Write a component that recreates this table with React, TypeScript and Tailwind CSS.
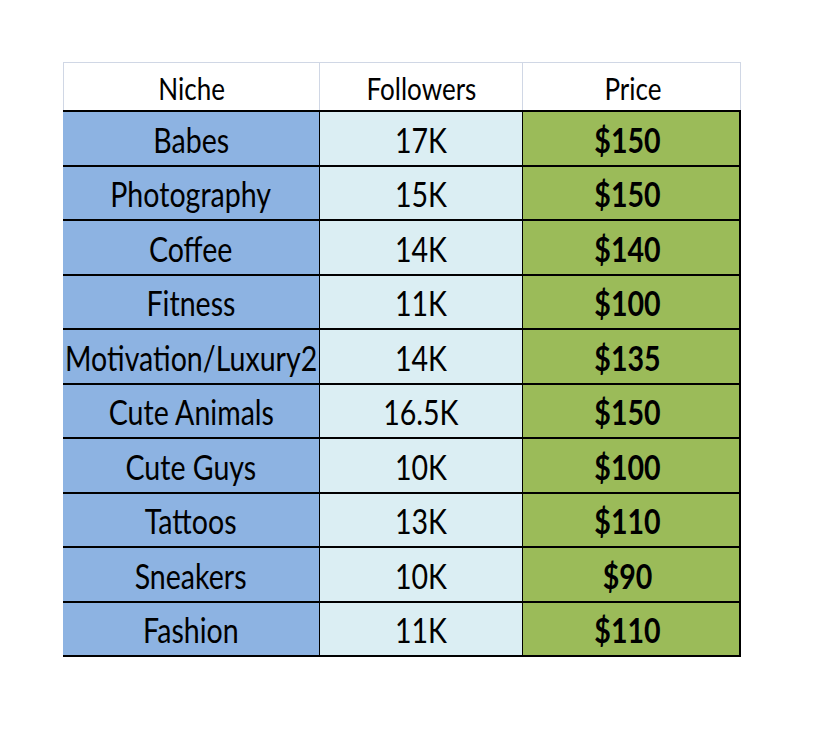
const ROWS = [
  { niche: "Babes", followers: "17K", price: "$150" },
  { niche: "Photography", followers: "15K", price: "$150" },
  { niche: "Coffee", followers: "14K", price: "$140" },
  { niche: "Fitness", followers: "11K", price: "$100" },
  { niche: "Motivation/Luxury2", followers: "14K", price: "$135" },
  { niche: "Cute Animals", followers: "16.5K", price: "$150" },
  { niche: "Cute Guys", followers: "10K", price: "$100" },
  { niche: "Tattoos", followers: "13K", price: "$110" },
  { niche: "Sneakers", followers: "10K", price: "$90" },
  { niche: "Fashion", followers: "11K", price: "$110" },
];

function Txt({ children, bold }: { children: string; bold?: boolean }) {
  return (
    <span
      className={`inline-block scale-x-[0.84] whitespace-nowrap leading-none ${bold ? "scale-x-[0.8] font-bold" : "font-normal"}`}
    >
      {children}
    </span>
  );
}

export default function App() {
  return (
    <div className="h-[751px] w-[822px] bg-white pl-[63px] pt-[62px] font-['Lato',sans-serif] text-black">
      <div className="w-[678px]">
        {/* header */}
        <div className="grid h-[48px] grid-cols-[256px_203px_219px] border border-b-0 border-[#d0d7e5] text-[31px]">
          <div className="flex items-center justify-center border-r border-[#d0d7e5] pt-[4px]">
            <Txt>Niche</Txt>
          </div>
          <div className="flex items-center justify-center border-r border-[#d0d7e5] pt-[4px]">
            <Txt>Followers</Txt>
          </div>
          <div className="flex items-center justify-center pt-[4px]">
            <Txt>Price</Txt>
          </div>
        </div>

        {/* body */}
        <div className="border-b-2 border-black">
          {ROWS.map((r) => (
            <div
              key={r.niche}
              className="grid h-[54.5px] grid-cols-[256px_203px_219px] border-t-2 border-black text-[34px]"
            >
              <div className="flex items-center justify-center bg-[#8db3e2] pt-[3px]">
                <Txt>{r.niche}</Txt>
              </div>
              <div className="flex items-center justify-center border-l border-black bg-[#dbeef3] pt-[3px]">
                <Txt>{r.followers}</Txt>
              </div>
              <div className="flex items-center justify-center border-x border-r-2 border-black bg-[#9bbb59] pr-[7px] pt-[3px]">
                <Txt bold>{r.price}</Txt>
              </div>
            </div>
          ))}
        </div>
      </div>
    </div>
  );
}
